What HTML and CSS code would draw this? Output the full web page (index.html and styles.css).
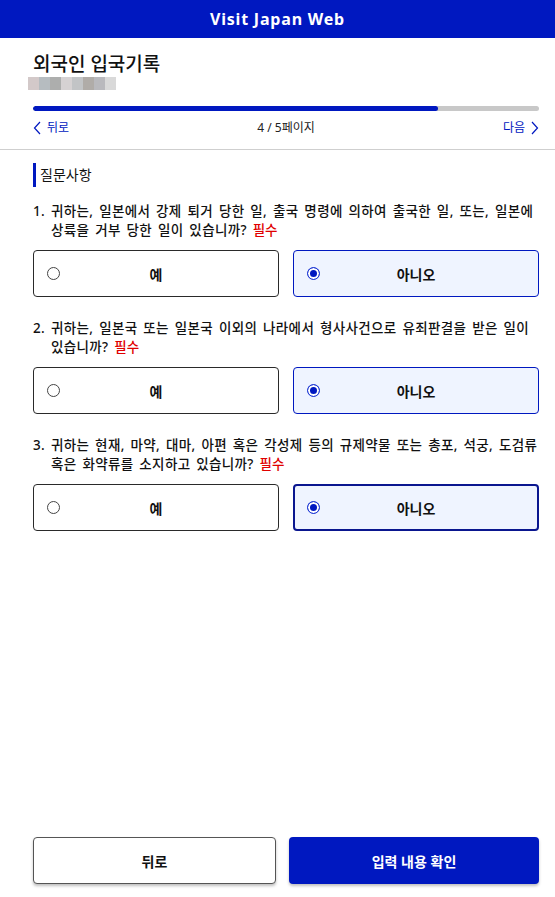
FILE: index.html
```html
<!DOCTYPE html>
<html lang="ko">
<head>
  <meta charset="utf-8">
  <link rel="stylesheet" href="styles.css">
</head>
<body>
  <div class="page">
    <!-- Top bar -->
    <header class="topbar">Visit Japan Web</header>

    <!-- Page heading, progress and pager -->
    <div class="head">
      <h1 class="page-title">외국인 입국기록</h1>
      <div class="blurred">
        <span style="background:#d3c9c9"></span><span style="background:#b6bcc0"></span><span style="background:#adaead"></span><span style="background:#d6d2d3"></span><span style="background:#c2c4c6"></span><span style="background:#b0aca8"></span><span style="background:#b9b9bd"></span><span style="background:#d9d9d9"></span>
      </div>
      <div class="progress"><div class="progress-fill" style="width:80%"></div></div>
      <div class="pager">
        <a class="pager-link">
          <svg viewBox="0 0 8 14" width="8" height="14"><path d="M7 1L1.5 7 7 13" fill="none" stroke="currentColor" stroke-width="1.2"/></svg>
          뒤로
        </a>
        <span class="pager-count">4 / 5페이지</span>
        <a class="pager-link">
          다음
          <svg viewBox="0 0 8 14" width="8" height="14"><path d="M1 1l5.5 6L1 13" fill="none" stroke="currentColor" stroke-width="1.2"/></svg>
        </a>
      </div>
    </div>

    <!-- Questions -->
    <main class="content">
      <h2 class="section-label">질문사항</h2>

      <div class="question">
        <p class="q-text">1. 귀하는, 일본에서 강제 퇴거 당한 일, 출국 명령에 의하여 출국한 일, 또는, 일본에 상륙을 거부 당한 일이 있습니까? <span class="required">필수</span></p>
        <div class="choices">
          <label class="choice"><span class="radio"></span><span class="choice-text">예</span></label>
          <label class="choice checked"><span class="radio"></span><span class="choice-text">아니오</span></label>
        </div>
      </div>

      <div class="question">
        <p class="q-text">2. 귀하는, 일본국 또는 일본국 이외의 나라에서 형사사건으로 유죄판결을 받은 일이 있습니까? <span class="required">필수</span></p>
        <div class="choices">
          <label class="choice"><span class="radio"></span><span class="choice-text">예</span></label>
          <label class="choice checked"><span class="radio"></span><span class="choice-text">아니오</span></label>
        </div>
      </div>

      <div class="question">
        <p class="q-text">3. 귀하는 현재, 마약, 대마, 아편 혹은 각성제 등의 규제약물 또는 총포, 석궁, 도검류 혹은 화약류를 소지하고 있습니까? <span class="required">필수</span></p>
        <div class="choices">
          <label class="choice"><span class="radio"></span><span class="choice-text">예</span></label>
          <label class="choice checked focused"><span class="radio"></span><span class="choice-text">아니오</span></label>
        </div>
      </div>
    </main>

    <!-- Bottom actions -->
    <footer class="actions">
      <button class="btn btn-back">뒤로</button>
      <button class="btn btn-primary">입력 내용 확인</button>
    </footer>
  </div>
</body>
</html>
```

FILE: styles.css
```css
* { box-sizing: border-box; }
body {
  margin: 0;
  font-family: "Noto Sans", "Noto Sans CJK KR", sans-serif;
  color: #111;
  background: #fff;
}
.page {
  min-height: 100vh;
  display: flex;
  flex-direction: column;
}
.topbar {
  height: 38px;
  background: #0018c0;
  color: #fff;
  font-weight: 700;
  font-size: 16px;
  letter-spacing: 0.8px;
  display: flex;
  align-items: center;
  justify-content: center;
}
.head {
  padding: 13px 16px 12px 33px;
  border-bottom: 1px solid #cfcfcf;
}
.page-title {
  margin: 0;
  font-size: 19px;
  line-height: 26px;
  font-weight: 500;
}
.blurred {
  display: flex;
  margin-left: -5px;
  height: 13px;
}
.blurred span {
  width: 11px;
  height: 13px;
}
.progress {
  margin-top: 16px;
  height: 5px;
  border-radius: 3px;
  background: #c8c8c8;
  overflow: hidden;
}
.progress-fill {
  height: 100%;
  background: #0018c0;
  border-radius: 3px;
}
.pager {
  margin-top: 8px;
  display: flex;
  justify-content: space-between;
  align-items: center;
  font-size: 12px;
  line-height: 18px;
}
.pager-link {
  display: flex;
  align-items: center;
  gap: 6px;
  color: #0018c0;
}
.pager-count {
  color: #222;
}
.content {
  padding: 13px 16px 0 33px;
}
.section-label {
  margin: 0 0 15px;
  border-left: 3px solid #0018c0;
  padding-left: 4px;
  font-size: 14px;
  font-weight: 400;
  line-height: 24px;
}
.question { margin-bottom: 22px; }
.q-text {
  margin: 0 0 11px;
  padding-left: 18px;
  text-indent: -18px;
  font-size: 13.5px;
  line-height: 18.5px;
  font-weight: 500;
  letter-spacing: 0.35px;
  word-spacing: 2px;
  word-break: keep-all;
}
.required {
  color: #e00000;
  letter-spacing: 0;
}
.choices {
  display: grid;
  grid-template-columns: 1fr 1fr;
  gap: 14px;
}
.choice {
  height: 47px;
  border: 1px solid #2a2a2a;
  border-radius: 4px;
  display: grid;
  grid-template-columns: 13px 1fr 13px;
  align-items: center;
  padding: 0 13px;
}
.choice.checked {
  background: #eff4ff;
  border-color: #0018c0;
}
.choice.focused {
  border: 2px solid #0a168f;
  padding: 0 12px;
}
.radio {
  width: 13px;
  height: 13px;
  border: 1px solid #444;
  border-radius: 50%;
  background: #fff;
}
.choice.checked .radio {
  border-color: #1f3ad6;
  background: #0018c0;
  box-shadow: inset 0 0 0 2px #fff;
}
.choice-text {
  text-align: center;
  font-size: 14px;
  font-weight: 700;
}
.actions {
  margin-top: auto;
  padding: 0 16px 13px 33px;
  display: grid;
  grid-template-columns: 243fr 250fr;
  gap: 13px;
}
.btn {
  height: 47px;
  border-radius: 4px;
  font-family: inherit;
  font-size: 14px;
  font-weight: 700;
  box-shadow: 0 2px 3px rgba(0, 0, 0, 0.25);
}
.btn-back {
  background: #fff;
  border: 1px solid #555;
  color: #111;
}
.btn-primary {
  background: #0018c0;
  border: none;
  color: #fff;
}
```
